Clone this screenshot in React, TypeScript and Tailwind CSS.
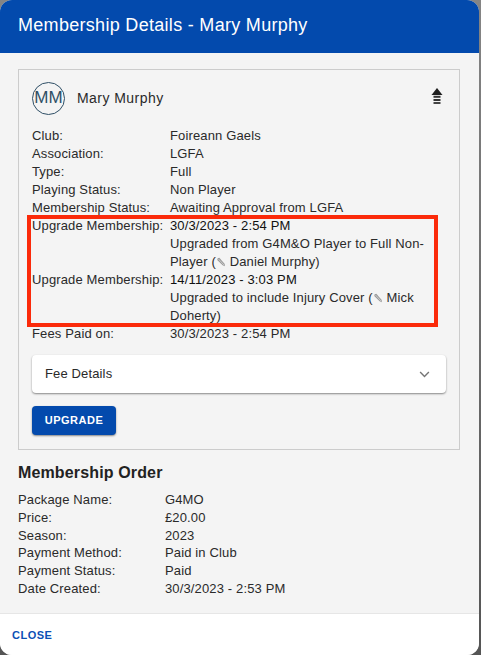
import React from "react";

const F = "font-['Liberation_Sans',Arial,sans-serif]";

function Pencil() {
  return (
    <svg viewBox="0 0 12 12" className="inline-block w-[10px] h-[10px] align-[-1px]" fill="none">
      <path d="M2 1.5 L4 1 L10.5 8.5 L10.5 11 L8 10 L1.5 3.5 Z" fill="#9a9a9a" />
      <path d="M3 2.5 L9.5 9.5" stroke="#e4e4e4" strokeWidth="0.8" />
    </svg>
  );
}

function Row({ label, children, labelW = "w-[138px]" }: { label: string; children: React.ReactNode; labelW?: string }) {
  return (
    <div className="flex">
      <div className={`${labelW} shrink-0`}>{label}</div>
      <div className="flex-1 min-w-0">{children}</div>
    </div>
  );
}

export default function App() {
  return (
    <div className={`${F} h-[655px] w-[481px] bg-linear-to-b from-[#858585] to-[#555555] overflow-hidden tracking-[0.14px]`}>
      <div className="w-[479px] h-[655px] flex flex-col rounded-[12px] overflow-hidden bg-[#f4f4f4]">
        <div className="h-[53px] shrink-0 bg-[#034aad] text-white text-[18px] leading-[50px] px-[18px] tracking-[0.3px]">
          Membership Details - Mary Murphy
        </div>
        <div className="relative flex-1 min-h-0 px-[18px] pt-[16px] text-[#2a2a2a] text-[13px] leading-[18px]">
          <div className="w-[442px] h-[381px] border border-[#cccccc] px-[13px]">
            <div className="flex items-center h-[55px] pt-[1px]">
              <div className="w-[33px] h-[33px] rounded-full border border-[#2f4f66] flex items-center justify-center text-[#2f4f66] text-[17px] tracking-normal">
                MM
              </div>
              <div className="ml-[12px] text-[14px] tracking-[0.45px]">Mary Murphy</div>
              <svg viewBox="0 0 14 18" className="ml-auto mr-[2px] -mt-[4px] w-[14px] h-[18px]">
                <path d="M7 1 L12.5 8 H1.5 Z" fill="#1f1f1f" />
                <rect x="3.5" y="8.8" width="7" height="2" fill="#333" />
                <rect x="3.5" y="12" width="7" height="2" fill="#333" />
                <rect x="3.5" y="15" width="7" height="2" fill="#444" />
              </svg>
            </div>
            <div className="mt-[2px]">
              <Row label="Club:">Foireann Gaels</Row>
              <Row label="Association:">LGFA</Row>
              <Row label="Type:">Full</Row>
              <Row label="Playing Status:">Non Player</Row>
              <Row label="Membership Status:">Awaiting Approval from LGFA</Row>
              <Row label="Upgrade Membership:">
                <div className="text-[#111]">30/3/2023 - 2:54 PM</div>
                <div>
                  Upgraded from G4M&amp;O Player to Full Non-Player (<Pencil /> Daniel Murphy)
                </div>
              </Row>
              <Row label="Upgrade Membership:">
                <div className="text-[#111]">14/11/2023 - 3:03 PM</div>
                <div>
                  Upgraded to include Injury Cover (<Pencil /> Mick Doherty)
                </div>
              </Row>
              <Row label="Fees Paid on:">30/3/2023 - 2:54 PM</Row>
            </div>
            <div className="mt-[12px] h-[38px] bg-white rounded-[4px] shadow-[0_1px_2px_rgba(0,0,0,0.45)] flex items-center justify-between pl-[13px] pr-[16px]">
              <span>Fee Details</span>
              <svg viewBox="0 0 12 8" className="w-[11px] h-[7px]" fill="none" stroke="#757575" strokeWidth="1.6">
                <path d="M1 1.2 L6 6.2 L11 1.2" />
              </svg>
            </div>
            <button className="mt-[13px] block w-[84px] h-[29px] pb-[1px] bg-[#034aad] rounded-[4px] shadow-[0_1px_2px_rgba(0,0,0,0.45)] text-white text-[11px] font-bold tracking-[0.5px]">
              UPGRADE
            </button>
          </div>
          <h2 className="mt-[12px] text-[16px] leading-[22px] font-bold text-[#222]">Membership Order</h2>
          <div className="mt-[7px] text-[13px] leading-[17.8px]">
            <Row label="Package Name:" labelW="w-[147px]">G4MO</Row>
            <Row label="Price:" labelW="w-[147px]">£20.00</Row>
            <Row label="Season:" labelW="w-[147px]">2023</Row>
            <Row label="Payment Method:" labelW="w-[147px]">Paid in Club</Row>
            <Row label="Payment Status:" labelW="w-[147px]">Paid</Row>
            <Row label="Date Created:" labelW="w-[147px]">30/3/2023 - 2:53 PM</Row>
          </div>
          <div className="absolute left-[27px] top-[162px] w-[411px] h-[112px] border-[4px] border-[#fb2a0a]" />
        </div>
        <div className="h-[42px] shrink-0 bg-white border-t border-[#e6e6e6] flex items-center px-[12px] pt-[2px]">
          <span className="text-[#0b50b5] text-[11px] font-bold tracking-[0.5px]">CLOSE</span>
        </div>
      </div>
    </div>
  );
}
